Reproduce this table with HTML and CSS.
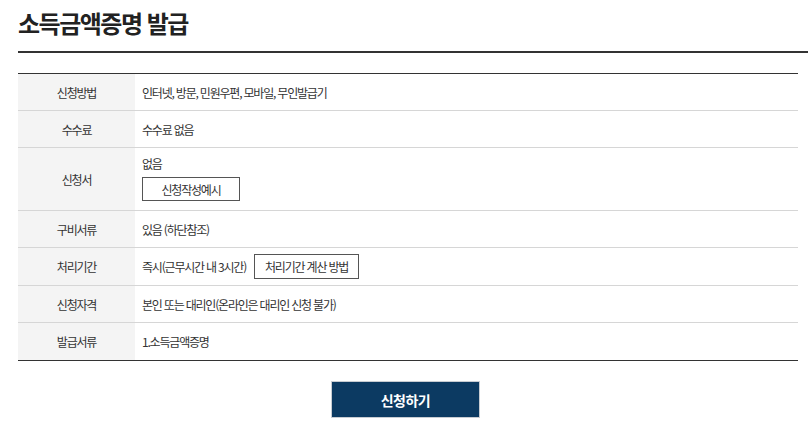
FILE: index.html
```html
<!DOCTYPE html>
<html lang="ko">
<head>
<meta charset="utf-8">
<link rel="stylesheet" href="styles.css">
</head>
<body>
<div class="page">
  <h1 class="title">소득금액증명 발급</h1>
  <div class="table">
    <div class="row">
      <div class="th">신청방법</div>
      <div class="td">인터넷, 방문, 민원우편, 모바일, 무인발급기</div>
    </div>
    <div class="row">
      <div class="th">수수료</div>
      <div class="td">수수료 없음</div>
    </div>
    <div class="row row-tall">
      <div class="th">신청서</div>
      <div class="td td-stack">
        <span>없음</span>
        <button class="btn">신청작성예시</button>
      </div>
    </div>
    <div class="row">
      <div class="th">구비서류</div>
      <div class="td">있음 (하단참조)</div>
    </div>
    <div class="row row-btn">
      <div class="th">처리기간</div>
      <div class="td td-inline">
        <span>즉시(근무시간 내 3시간)</span>
        <button class="btn btn-wide">처리기간 계산 방법</button>
      </div>
    </div>
    <div class="row">
      <div class="th">신청자격</div>
      <div class="td">본인 또는 대리인(온라인은 대리인 신청 불가)</div>
    </div>
    <div class="row row-last">
      <div class="th">발급서류</div>
      <div class="td">1.소득금액증명</div>
    </div>
  </div>
  <div class="actions">
    <button class="submit">신청하기</button>
  </div>
</div>
</body>
</html>
```
FILE: styles.css
```css
* { box-sizing: border-box; }
html, body { margin: 0; padding: 0; background: #fff; }
body {
  font-family: "Noto Sans CJK KR", "Noto Sans", sans-serif;
  color: #333;
}
.page {
  display: flex;
  flex-direction: column;
  padding-left: 18px;
}
.title {
  margin: 0;
  height: 53px;
  padding-top: 7px;
  font-size: 24px;
  line-height: 32px;
  font-weight: 700;
  letter-spacing: -1.5px;
  color: #222;
  border-bottom: 2px solid #333;
}
.table {
  margin-top: 20px;
  margin-right: 10px;
  border-top: 1px solid #333;
  border-bottom: 1px solid #333;
  display: flex;
  flex-direction: column;
}
.row {
  display: flex;
  min-height: 37px;
  border-bottom: 1px solid #d6d6d6;
}
.row-last { border-bottom: none; min-height: 37px; }
.row-btn { min-height: 38px; }
.row-tall { min-height: 63px; }
.th {
  width: 117px;
  flex: none;
  background: #f4f4f4;
  display: flex;
  align-items: center;
  justify-content: center;
  font-size: 12px;
  letter-spacing: -1.2px;
  color: #333;
}
.td {
  flex: 1;
  display: flex;
  align-items: center;
  padding-left: 7px;
  font-size: 12px;
  letter-spacing: -1.2px;
  color: #333;
}
.td-stack {
  flex-direction: column;
  align-items: flex-start;
  justify-content: center;
  gap: 5px;
  padding-top: 6px;
  padding-bottom: 8px;
}
.td-inline { gap: 8px; }
.btn {
  font-family: inherit;
  font-size: 12px;
  letter-spacing: -1.2px;
  color: #333;
  background: #fff;
  border: 1px solid #555;
  height: 24px;
  width: 98px;
  padding: 0;
  border-radius: 0;
}
.btn-wide { width: 105px; height: 25px; }
.actions {
  display: flex;
  justify-content: center;
  margin-top: 20px;
  padding-right: 15px;
}
.submit {
  width: 149px;
  height: 37px;
  background: #0c3a62;
  border: 1px solid #c8ccd2;
  color: #fff;
  font-family: inherit;
  font-size: 14px;
  font-weight: 700;
  letter-spacing: -0.5px;
  padding: 0;
  border-radius: 0;
}
```
